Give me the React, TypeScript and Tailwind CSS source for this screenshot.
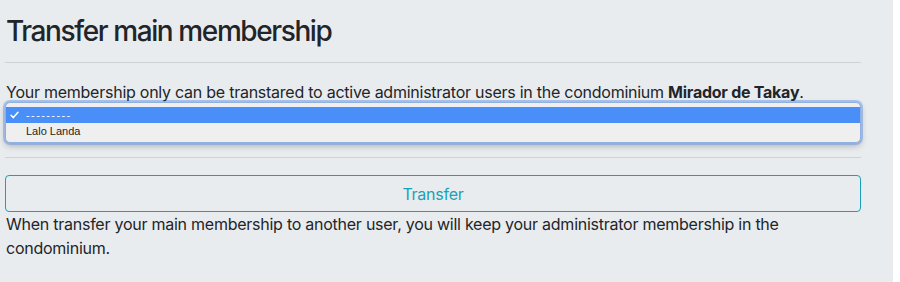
import React from 'react';

const options = [
  { id: '', label: '---------' },
  { id: '1', label: 'Lalo Landa' },
];

export default function App() {
  const selected = '';

  return (
    <div className="flex w-[900px] h-[282px] bg-white" style={{ fontFamily: 'Inter, "Liberation Sans", Arial, sans-serif' }}>
      <div className="w-[893px] h-full bg-[#e9ecef] pl-[5px] pr-[32px] text-[#212529]">
        <h3 className="pt-[14px] pl-[1px] text-[28px] leading-[34px] font-medium tracking-[-1.4px]">Transfer main membership</h3>
        <hr className="mt-[14px] border-t border-[#cfd2d5]" />

        <p className="mt-[18px] text-[16px] leading-[22px] pl-[1px] tracking-[-0.25px]">
          Your membership only can be transtared to active administrator users in the condominium{' '}
          <b className="font-bold">Mirador de Takay</b>.
        </p>

        {/* open listbox */}
        <div className="mt-[-1px] h-[41px] rounded-[5px] border border-[#8fb0e0] bg-[#efefef] shadow-[0_0_0_2px_rgba(120,160,225,0.55),0_3px_6px_rgba(0,0,0,0.25)] pt-[4px] overflow-hidden">
          {options.map(o => (
            <div
              key={o.id}
              className={`flex items-center h-[16px] text-[11px] leading-[16px] ${o.id === selected ? 'bg-[#4a8ef8] text-white' : 'text-[#262626]'}`}
              style={{ fontFamily: '"Liberation Sans", Arial, sans-serif' }}
            >
              <span className="w-[20px] pl-[4px]">
                {o.id === selected && (
                  <svg width="9" height="8" viewBox="0 0 9 8" fill="none">
                    <path d="M1 4.2 L3.4 6.6 L8 1.2" stroke="white" strokeWidth="1.5" strokeLinecap="round" strokeLinejoin="round" />
                  </svg>
                )}
              </span>
              <span className={o.id === selected ? 'tracking-[1.4px]' : ''}>{o.label}</span>
            </div>
          ))}
        </div>

        <hr className="mt-[14px] border-t border-[#cfd2d5]" />

        <button className="mt-[17px] w-full h-[37px] rounded-[4px] border border-[#17a2b8] text-[#17a2b8] text-[16px] leading-[24px] tracking-[-0.25px]">
          Transfer
        </button>
        <p className="text-[16px] leading-[24px] pl-[1px] pr-[80px] tracking-[-0.25px]">
          When transfer your main membership to another user, you will keep your administrator membership in the condominium.
        </p>
      </div>
    </div>
  );
}
